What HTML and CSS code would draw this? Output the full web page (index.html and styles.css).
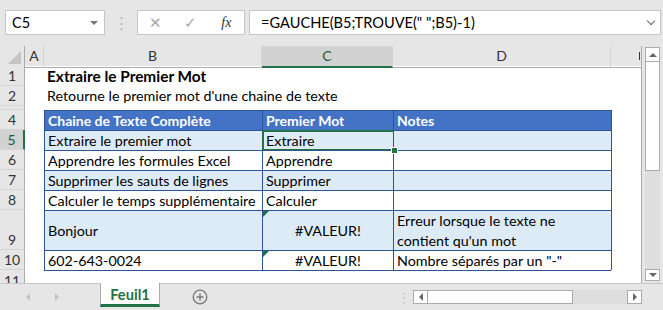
FILE: index.html
```html
<!DOCTYPE html>
<html lang="fr">
<head>
    <meta charset="UTF-8">
    <title>Feuil1 - Extraire le Premier Mot</title>
    <link rel="stylesheet" href="styles.css">
</head>
<body>
    <div class="toolbar">
        <div class="name-box">C5 <span class="caret"></span></div>
        <div class="grip">&#8942;</div>
        <div class="fx-box">
            <span class="fx-btn cancel">&#10005;</span>
            <span class="fx-btn enter">&#10003;</span>
            <span class="fx-btn fx">fx</span>
        </div>
        <div class="formula">=GAUCHE(B5;TROUVE(" ";B5)-1)<span class="chevron"></span></div>
    </div>

    <div class="workspace">
        <div class="sheet">
            <div class="row head">
                <div class="corner"><span class="corner-tri"></span></div>
                <div class="ch">A</div>
                <div class="ch">B</div>
                <div class="ch sel">C</div>
                <div class="ch">D</div>
                <div class="ch last"><span class="cursor-mark"></span></div>
            </div>
            <div class="row">
                <div class="rh">1</div><div></div>
                <div class="cell title">Extraire le Premier Mot</div><div></div><div></div><div></div>
            </div>
            <div class="row">
                <div class="rh">2</div><div></div>
                <div class="cell">Retourne le premier mot d'une chaine de texte</div><div></div><div></div><div></div>
            </div>
            <div class="row r3">
                <div class="rh"></div><div></div><div></div><div></div><div></div><div></div>
            </div>
            <div class="row">
                <div class="rh">4</div><div></div>
                <div class="cell t th">Chaine de Texte Complète</div>
                <div class="cell t th">Premier Mot</div>
                <div class="cell t th">Notes</div>
                <div class="t-end"></div>
            </div>
            <div class="row">
                <div class="rh sel">5</div><div></div>
                <div class="cell t band">Extraire le premier mot</div>
                <div class="cell t band active">Extraire<span class="fill-handle"></span></div>
                <div class="cell t band"></div>
                <div class="t-end"></div>
            </div>
            <div class="row">
                <div class="rh">6</div><div></div>
                <div class="cell t">Apprendre les formules Excel</div>
                <div class="cell t">Apprendre</div>
                <div class="cell t"></div>
                <div class="t-end"></div>
            </div>
            <div class="row">
                <div class="rh">7</div><div></div>
                <div class="cell t band">Supprimer les sauts de lignes</div>
                <div class="cell t band">Supprimer</div>
                <div class="cell t band"></div>
                <div class="t-end"></div>
            </div>
            <div class="row">
                <div class="rh">8</div><div></div>
                <div class="cell t">Calculer le temps supplémentaire</div>
                <div class="cell t">Calculer</div>
                <div class="cell t"></div>
                <div class="t-end"></div>
            </div>
            <div class="row r9">
                <div class="rh">9</div><div></div>
                <div class="cell t band mid">Bonjour</div>
                <div class="cell t band mid center err">#VALEUR!</div>
                <div class="cell t band wrap">Erreur lorsque le texte ne contient qu'un mot</div>
                <div class="t-end"></div>
            </div>
            <div class="row">
                <div class="rh">10</div><div></div>
                <div class="cell t">602-643-0024</div>
                <div class="cell t center err">#VALEUR!</div>
                <div class="cell t">Nombre séparés par un "-"</div>
                <div class="t-end"></div>
            </div>
            <div class="row r11">
                <div class="rh">11</div><div></div>
                <div class="t-bottom"></div><div class="t-bottom"></div><div class="t-bottom"></div><div></div>
            </div>
        </div>
        <div class="vscroll">
            <div class="sb-btn"><span class="tri up"></span></div>
            <div class="sb-thumb v"></div>
            <div class="sb-track"></div>
            <div class="sb-btn down"><span class="tri dn"></span></div>
        </div>
    </div>

    <div class="tabs">
        <span class="tri lf nav first"></span>
        <span class="tri rt nav second"></span>
        <div class="tab">Feuil1</div>
        <svg class="add-sheet" width="16" height="16" viewBox="0 0 16 16">
            <circle cx="8" cy="8" r="6.8" fill="none" stroke="#7a7a7a" stroke-width="1.3"/>
            <path d="M8 4.5v7M4.5 8h7" stroke="#7a7a7a" stroke-width="1.4"/>
        </svg>
        <div class="tab-grip">&#8942;</div>
        <div class="hscroll">
            <div class="sb-btn h"><span class="tri lf"></span></div>
            <div class="sb-thumb h"></div>
            <div class="sb-track"></div>
            <div class="sb-btn h"><span class="tri rt"></span></div>
        </div>
    </div>
</body>
</html>
```

FILE: styles.css
```css
body {
    margin: 0;
    width: 663px;
    height: 310px;
    overflow: hidden;
    background-color: #e6e6e6;
    font-family: Lato, "Liberation Sans", sans-serif;
    color: #000;
}

/* formula bar */
.toolbar {
    height: 46px;
    box-sizing: border-box;
    padding-top: 10px;
    display: flex;
    align-items: flex-start;
}
.name-box {
    margin-left: 5px;
    width: 100px;
    height: 25px;
    box-sizing: border-box;
    border: 1px solid #c6c6c6;
    background-color: #fff;
    display: flex;
    align-items: center;
    justify-content: space-between;
    padding: 0 6px;
    font-size: 14.5px;
}
.caret {
    width: 0;
    height: 0;
    border-left: 4px solid transparent;
    border-right: 4px solid transparent;
    border-top: 4px solid #777;
}
.grip {
    width: 32px;
    text-align: center;
    color: #b8b8b8;
    font-size: 15px;
    line-height: 25px;
}
.fx-box {
    width: 108px;
    height: 25px;
    box-sizing: border-box;
    border: 1px solid #c6c6c6;
    background-color: #fff;
    display: flex;
}
.fx-btn {
    width: 36px;
    text-align: center;
    line-height: 23px;
    color: #a6a6a6;
    font-size: 15px;
}
.fx-btn.fx {
    color: #333;
    font-family: "Liberation Serif", serif;
    font-style: italic;
    font-size: 14px;
}
.formula {
    margin-left: 4px;
    margin-right: 2px;
    flex: 1;
    height: 25px;
    box-sizing: border-box;
    border: 1px solid #c6c6c6;
    background-color: #fff;
    padding: 0 6px 0 11px;
    font-size: 14.6px;
    line-height: 23px;
    display: flex;
    justify-content: space-between;
    align-items: center;
    white-space: pre;
}
.chevron {
    width: 5px;
    height: 5px;
    border-right: 1.5px solid #666;
    border-bottom: 1.5px solid #666;
    transform: rotate(45deg);
    margin-top: -4px;
}

/* grid */
.workspace {
    display: flex;
    height: 237px;
}
.sheet {
    width: 642px;
    box-sizing: border-box;
    background-color: #fff;
    border-right: 1px solid #ababab;
    overflow: hidden;
}
.row {
    display: grid;
    grid-template-columns: 25px 19px 218px 131px 218px 30px;
    height: 20px;
}
.row.r3 { height: 4px; }
.row.r9 { height: 40px; }
.row.r11 { height: 20px; }
.row > div {
    box-sizing: border-box;
    min-width: 0;
}
.row.head {
    background-color: #e6e6e6;
}
.corner {
    border-right: 1px solid #ababab;
    border-bottom: 1px solid #ababab;
    display: flex;
    align-items: flex-end;
    justify-content: flex-end;
    padding: 0 3px 3px 0;
}
.corner-tri {
    width: 0;
    height: 0;
    border-left: 13px solid transparent;
    border-bottom: 13px solid #c4c4c4;
}
.ch {
    border-right: 1px solid #d4d4d4;
    border-bottom: 1px solid #ababab;
    text-align: center;
    font-size: 14px;
    line-height: 20px;
    color: #333;
}
.ch.sel {
    background-color: #d2d2d2;
    border-bottom: 2px solid #217346;
    color: #1d5c38;
}
.ch.last {
    border-right: none;
    display: flex;
    justify-content: flex-end;
    padding: 6px 1px 0 0;
}
.cursor-mark {
    width: 1px;
    height: 8px;
    background-color: #7a1020;
}
.rh {
    background-color: #e6e6e6;
    border-right: 1px solid #ababab;
    border-bottom: 1px solid #d4d4d4;
    text-align: center;
    font-size: 14px;
    line-height: 19px;
    color: #333;
    display: flex;
    align-items: flex-end;
    justify-content: center;
}
.rh.sel {
    background-color: #d2d2d2;
    border-right: 2px solid #217346;
    color: #1d5c38;
}
.r11 .rh {
    border-bottom: none;
}

.cell {
    padding: 0 3px;
    font-size: 14.3px;
    line-height: 20px;
    white-space: nowrap;
}
.title {
    font-weight: bold;
    font-size: 15.4px;
}
.t {
    border-left: 1px solid #2f5496;
    border-top: 1px solid #2f5496;
    line-height: 19px;
    position: relative;
}
.t-end {
    border-left: 1px solid #2f5496;
}
.t-bottom {
    border-top: 1px solid #2f5496;
}
.th {
    background-color: #4472c4;
    color: #fff;
    font-weight: bold;
    font-size: 14px;
}
.band {
    background-color: #ddebf7;
}
.mid {
    display: flex;
    align-items: center;
}
.center {
    justify-content: center;
    text-align: center;
}
.wrap {
    white-space: normal;
    line-height: 19.5px;
}
.err::before {
    content: "";
    position: absolute;
    left: 0;
    top: 0;
    border-top: 6px solid #1e7145;
    border-right: 6px solid transparent;
}
.active::after {
    content: "";
    position: absolute;
    left: -1px;
    top: -1px;
    right: -2px;
    bottom: -1px;
    border: 2px solid #217346;
}
.fill-handle {
    position: absolute;
    right: -5px;
    bottom: -4px;
    width: 5px;
    height: 5px;
    background-color: #217346;
    border: 1px solid #fff;
    z-index: 2;
}

/* scroll bars */
.vscroll {
    width: 21px;
    box-sizing: border-box;
    padding: 1px 3px 2px 3px;
    display: flex;
    flex-direction: column;
}
.sb-btn {
    width: 15px;
    height: 15px;
    box-sizing: border-box;
    border: 1px solid #ababab;
    background-color: #fff;
    display: flex;
    align-items: center;
    justify-content: center;
}
.sb-btn.down {
    height: 12px;
}
.sb-thumb.v {
    height: 109px;
    box-sizing: border-box;
    border: 1px solid #ababab;
    border-top: none;
    background-color: #fff;
}
.sb-track {
    flex: 1;
    background-color: #dedede;
}
.tri {
    width: 0;
    height: 0;
}
.tri.up {
    border-left: 4px solid transparent;
    border-right: 4px solid transparent;
    border-bottom: 4px solid #666;
}
.tri.dn {
    border-left: 4px solid transparent;
    border-right: 4px solid transparent;
    border-top: 4px solid #666;
}
.tri.lf {
    border-top: 4px solid transparent;
    border-bottom: 4px solid transparent;
    border-right: 4px solid #666;
}
.tri.rt {
    border-top: 4px solid transparent;
    border-bottom: 4px solid transparent;
    border-left: 4px solid #666;
}

/* sheet tabs */
.tabs {
    height: 27px;
    box-sizing: border-box;
    border-top: 1px solid #c6c6c6;
    display: flex;
    align-items: center;
}
.tri.nav {
    border-right-color: #c2c2c2;
    border-left-color: #c2c2c2;
}
.tri.first {
    margin-left: 26px;
}
.tri.second {
    margin-left: 25px;
}
.tab {
    margin-left: 41px;
    align-self: stretch;
    margin-top: -1px;
    width: 60px;
    box-sizing: border-box;
    background-color: #fff;
    border-left: 1px solid #ababab;
    border-right: 1px solid #ababab;
    border-bottom: 3px solid #217346;
    margin-bottom: 3px;
    text-align: center;
    color: #217346;
    font-weight: bold;
    font-size: 14.67px;
    line-height: 24px;
}
.add-sheet {
    margin-left: 32px;
}
.tab-grip {
    margin-left: 189px;
    width: 4px;
    color: #c8c8c8;
    font-size: 14px;
    text-align: center;
}
.hscroll {
    margin-left: 12px;
    width: 229px;
    height: 14px;
    display: flex;
}
.sb-btn.h {
    height: 14px;
}
.sb-thumb.h {
    width: 145px;
    box-sizing: border-box;
    border: 1px solid #ababab;
    border-left: none;
    background-color: #fff;
}
```
